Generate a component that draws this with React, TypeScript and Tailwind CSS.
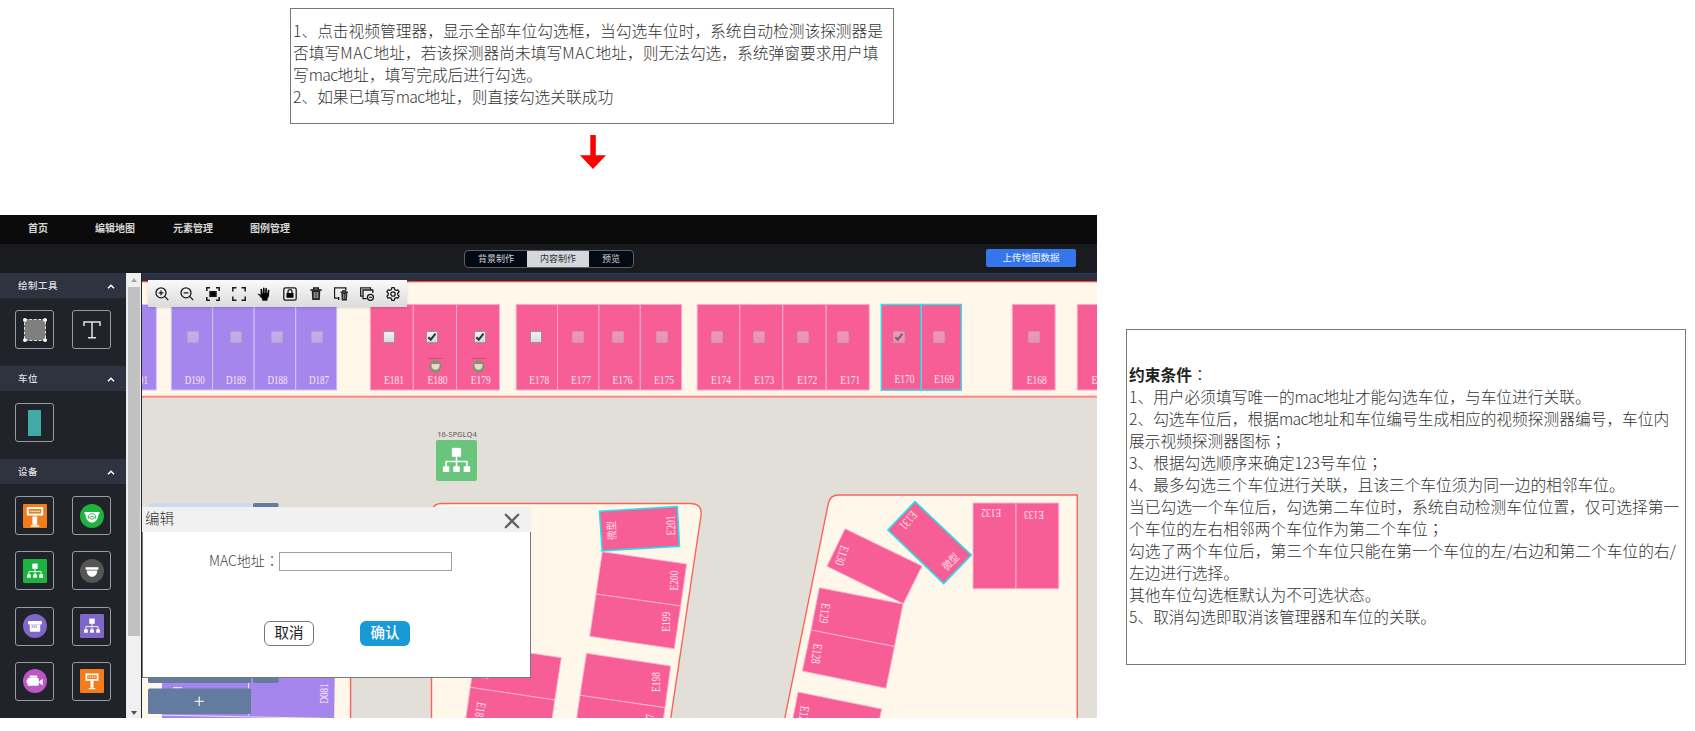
import React from "react";

type Pt = [number, number];

const CJK = "font-['Noto_Sans_CJK_SC',sans-serif]";
const CJK_MID = "font-['Noto_Sans_CJK_TC',sans-serif]";

/* ---------- Notes ---------- */

function NoteLine({ text, bold = false }: { text: string; bold?: boolean }) {
  return (
    <p className={bold ? "whitespace-nowrap font-bold text-[#222]" : "whitespace-nowrap"}>
      {text.split(/([；：]|MAC|mac)/).map((part, i) => {
        if (part === "；" || part === "：") {
          return (
            <span key={i} lang="zh-TW" className={`font-light ${CJK_MID}`}>
              {part}
            </span>
          );
        }
        if (part === "MAC") return <span key={i} className="tracking-[0.700px]">{part}</span>;
        if (part === "mac") return <span key={i} className="tracking-[-0.600px]">{part}</span>;
        return <React.Fragment key={i}>{part}</React.Fragment>;
      })}
    </p>
  );
}

const FLOW_NOTE = [
  "1、点击视频管理器，显示全部车位勾选框，当勾选车位时，系统自动检测该探测器是",
  "否填写MAC地址，若该探测器尚未填写MAC地址，则无法勾选，系统弹窗要求用户填",
  "写mac地址，填写完成后进行勾选。",
  "2、如果已填写mac地址，则直接勾选关联成功",
];

const RULES = [
  "1、用户必须填写唯一的mac地址才能勾选车位，与车位进行关联。",
  "2、勾选车位后，根据mac地址和车位编号生成相应的视频探测器编号，车位内",
  "展示视频探测器图标；",
  "3、根据勾选顺序来确定123号车位；",
  "4、最多勾选三个车位进行关联，且该三个车位须为同一边的相邻车位。",
  "当已勾选一个车位后，勾选第二车位时，系统自动检测车位位置，仅可选择第一",
  "个车位的左右相邻两个车位作为第二个车位；",
  "勾选了两个车位后，第三个车位只能在第一个车位的左/右边和第二个车位的右/",
  "左边进行选择。",
  "其他车位勾选框默认为不可选状态。",
  "5、取消勾选即取消该管理器和车位的关联。",
];

/* ---------- Sidebar ---------- */

function Tree({ color }: { color: string }) {
  return (
    <svg viewBox="0 0 24 24" className="h-full w-full">
      <rect width="24" height="24" rx="1.2" fill={color} />
      <rect x="9.3" y="4.6" width="5.4" height="5.2" fill="#fff" />
      <path d="M12 9.5v6M5.9 15.500v-2.900h12.200v2.900" fill="none" stroke="#fff" strokeWidth="0.9" />
      <rect x="4" y="15.300" width="3.800" height="3.500" rx="0.400" fill="#fff" />
      <rect x="10.100" y="15.300" width="3.800" height="3.500" rx="0.400" fill="#fff" />
      <rect x="16.200" y="15.300" width="3.800" height="3.500" rx="0.400" fill="#fff" />
    </svg>
  );
}

function Sign({ small = false }: { small?: boolean }) {
  return (
    <svg viewBox="0 0 24 24" className="h-full w-full">
      <rect width="24" height="24" rx="1" fill="#f27b1a" />
      {small ? (
        <g>
          <path d="M5.500 4.500h13v7.300h-13z" fill="#fff" />
          <path d="M7.200 6.200h9.600v3.800H7.200z" fill="#f27b1a" />
          <path d="M8.200 8.100h7.600" stroke="#fff" strokeWidth="1" strokeDasharray="1.300 0.500" />
          <path d="M10.500 11.800h3v6.900h-3zM8.700 19h6.600v1.300H8.700z" fill="#fff" />
        </g>
      ) : (
        <g>
          <path d="M3.800 3h16.400v8.600H3.800z" fill="#fff" />
          <path d="M5.800 5h12.400v4.600H5.800z" fill="#f27b1a" />
          <path d="M7 7.300h10" stroke="#fff" strokeWidth="1" strokeDasharray="1.300 0.500" />
          <path d="M9.400 12.600h4.800v8.200H9.400zM7.600 21.200h8.600v1.500H7.600z" fill="#fff" />
        </g>
      )}
    </svg>
  );
}

function DomeGreen() {
  return (
    <svg viewBox="0 0 24 24" className="h-full w-full">
      <circle cx="12" cy="12" r="12" fill="#1fb23c" />
      <path d="M4.500 8h15v1.700h-.8c-.3 5-2.800 8.800-6.700 8.800S5.600 14.700 5.300 9.700h-.8z" fill="#fff" />
      <path d="M8.800 14.800a3.600 3.600 0 116.400 0" fill="none" stroke="#1fb23c" strokeWidth="0.900" />
      <ellipse cx="12" cy="13.700" rx="2" ry="1.500" fill="none" stroke="#1fb23c" strokeWidth="0.900" />
    </svg>
  );
}

function DomeGray() {
  return (
    <svg viewBox="0 0 24 24" className="h-full w-full">
      <circle cx="12" cy="12" r="12" fill="#555" />
      <path d="M5.600 8.200h12.800v2.600H5.600z" fill="#fff" />
      <path d="M6.800 11.500h10.400c0 3.900-2.200 6.300-5.200 6.300s-5.200-2.400-5.200-6.300z" fill="#fff" />
    </svg>
  );
}

function Detector() {
  return (
    <svg viewBox="0 0 24 24" className="h-full w-full">
      <circle cx="12" cy="12" r="12" fill="#7f66c8" />
      <rect x="5" y="7" width="14" height="3.500" rx="1" fill="#fff" />
      <path d="M6.800 10.500h10.400v6c0 .8-.5 1.300-1.300 1.300H8.100c-.8 0-1.300-.5-1.300-1.300z" fill="#fff" />
      <path d="M9.200 11v3M11.200 11v3M13.200 11v3" stroke="#7f66c8" strokeWidth="0.700" />
    </svg>
  );
}

function Camera() {
  return (
    <svg viewBox="0 0 24 24" className="h-full w-full">
      <circle cx="12" cy="12" r="12" fill="#bb56c4" />
      <rect x="6.500" y="6.600" width="8" height="2.200" rx="1" fill="#fff" />
      <rect x="4.500" y="9" width="11.300" height="7.800" rx="1.300" fill="#fff" />
      <path d="M16.300 12.300l3.500-2.500v6.700l-3.500-2.500z" fill="#fff" />
      <rect x="3.600" y="11" width="1.500" height="3" fill="#fff" />
    </svg>
  );
}

function AreaIcon() {
  return (
    <svg viewBox="0 0 24 24" className="h-full w-full">
      <rect x="1.500" y="1.500" width="21" height="21" fill="#7f7f7f" stroke="#eee" strokeWidth="0.900" strokeDasharray="3 1.600" />
      <circle cx="1.900" cy="1.900" r="1.900" fill="#fff" />
      <circle cx="22.100" cy="1.900" r="1.900" fill="#fff" />
      <circle cx="1.900" cy="22.100" r="1.900" fill="#fff" />
      <circle cx="22.100" cy="22.100" r="1.900" fill="#fff" />
    </svg>
  );
}

function TextIcon() {
  return (
    <svg viewBox="0 0 24 24" className="h-full w-full" fill="none" stroke="#e4e4e6" strokeWidth="1.500">
      <path d="M4 8V4h16v4M12 4v15.700M8 19.800h8" />
    </svg>
  );
}

function Tile({ children }: { children: React.ReactNode }) {
  return (
    <div className="flex h-[39px] w-[39px] items-center justify-center rounded-[3px] border border-[#9a9ba0]">
      <div className="h-6 w-6">{children}</div>
    </div>
  );
}

function Section({ title, children }: { title: string; children: React.ReactNode }) {
  return (
    <section>
      <h2 className="flex h-[25px] items-center justify-between bg-[#2f333f] pl-[18px] pr-[11px]">
        <span className="text-[9.500px] font-medium leading-none tracking-[0.500px] text-[#dedfe2]">{title}</span>
        <svg viewBox="0 0 8 5" className="mt-0.5 h-[5px] w-2" fill="none" stroke="#fff" strokeWidth="1.500">
          <path d="M1 4.200L4 1.300l3 2.900" />
        </svg>
      </h2>
      <div className="grid grid-cols-[57px_39px] gap-y-[16.300px] pb-[17px] pl-[15px] pt-3">{children}</div>
    </section>
  );
}

function Sidebar() {
  return (
    <aside className="flex h-[445px] w-[142px] shrink-0 bg-[#20232a]">
      <div className="h-full w-[126px] overflow-hidden">
        <Section title="绘制工具">
          <Tile><AreaIcon /></Tile>
          <Tile><TextIcon /></Tile>
        </Section>
        <Section title="车位">
          <Tile>
            <div className="mx-auto h-[26px] w-[13px] -translate-y-px bg-[#41aaa6]" />
          </Tile>
        </Section>
        <Section title="设备">
          <Tile><Sign /></Tile>
          <Tile><DomeGreen /></Tile>
          <Tile><Tree color="#1cb440" /></Tile>
          <Tile><DomeGray /></Tile>
          <Tile><Detector /></Tile>
          <Tile><Tree color="#7f66c8" /></Tile>
          <Tile><Camera /></Tile>
          <Tile><Sign small /></Tile>
        </Section>
      </div>
      <div className="flex h-full w-[15px] flex-col items-center border-l border-[#e8e8e8] bg-[#f0f0f0]">
        <div className="flex h-[14px] items-center justify-center">
          <svg viewBox="0 0 6 4" className="h-1 w-1.5" fill="#a5a5a5"><path d="M0 4l3-4 3 4z" /></svg>
        </div>
        <div className="h-[349px] w-3 bg-[#c1c1c1]" />
        <div className="mt-auto flex h-[11px] items-center justify-center">
          <svg viewBox="0 0 6 4" className="h-1 w-1.5" fill="#505050"><path d="M0 0l3 4 3-4z" /></svg>
        </div>
      </div>
    </aside>
  );
}

/* ---------- Map ---------- */

type Spot = { x: number; w: number; label: string; lx: number; ly?: number; kind: "p" | "k" | "c" };

const TOP_SPOTS: Spot[] = [
  { x: 115, w: 41.300, label: "D191", lx: 138, kind: "p" },
  { x: 171.300, w: 41.300, label: "D190", lx: 194.700, kind: "p" },
  { x: 212.600, w: 41.500, label: "D189", lx: 236, kind: "p" },
  { x: 254.100, w: 41.600, label: "D188", lx: 277.500, kind: "p" },
  { x: 295.700, w: 41, label: "D187", lx: 319, kind: "p" },
  { x: 370.300, w: 43, label: "E181", lx: 394, kind: "k" },
  { x: 413.300, w: 43.200, label: "E180", lx: 437.500, kind: "k" },
  { x: 456.500, w: 43, label: "E179", lx: 480.800, kind: "k" },
  { x: 516.200, w: 41.300, label: "E178", lx: 539.300, kind: "k" },
  { x: 557.500, w: 41.400, label: "E177", lx: 581, kind: "k" },
  { x: 598.900, w: 41.400, label: "E176", lx: 622.500, kind: "k" },
  { x: 640.300, w: 41.300, label: "E175", lx: 664, kind: "k" },
  { x: 697.200, w: 42.600, label: "E174", lx: 721, kind: "k" },
  { x: 739.800, w: 43, label: "E173", lx: 764.300, kind: "k" },
  { x: 782.800, w: 43.400, label: "E172", lx: 807.300, kind: "k" },
  { x: 826.200, w: 43, label: "E171", lx: 850.200, kind: "k" },
  { x: 881.300, w: 40, label: "E170", lx: 904.500, ly: 379, kind: "c" },
  { x: 921.300, w: 40, label: "E169", lx: 944, ly: 379, kind: "c" },
  { x: 1012.300, w: 42.800, label: "E168", lx: 1036.700, kind: "k" },
  { x: 1077.300, w: 43, label: "E167", lx: 1101.500, kind: "k" },
];

type Slot = { pts: Pt[]; cyan?: boolean };

const SLOTS: Slot[] = [
  { pts: [[602.300, 551.700], [686.700, 564], [680.700, 606], [596, 594]] },
  { pts: [[596, 594], [680.700, 606], [674.300, 648.700], [589.700, 636.300]] },
  { pts: [[586.500, 653.300], [670.700, 666], [665, 707.700], [580, 695.300]] },
  { pts: [[580, 695.300], [665, 707.700], [659, 749], [574, 737]] },
  { pts: [[476.500, 645], [561.300, 657.700], [554.800, 700], [470.300, 687.300]] },
  { pts: [[470.300, 687.300], [554.800, 700], [548.700, 742], [464.300, 729]] },
  { pts: [[599.500, 511.300], [677.300, 506.700], [679.500, 546.300], [602.200, 550.800]], cyan: true },
  { pts: [[973, 503], [1016, 503], [1016, 588.700], [973, 588.700]] },
  { pts: [[1016, 503], [1058.700, 503], [1058.700, 588.700], [1016, 588.700]] },
  { pts: [[845, 528.700], [922, 566], [903.300, 603.700], [827, 566.300]] },
  { pts: [[819.300, 587.700], [903, 604], [894.500, 646.500], [811, 630]] },
  { pts: [[811, 630], [894.500, 646.500], [886, 688.300], [802.300, 671]] },
  { pts: [[798, 692], [881.700, 709], [873, 750], [790, 733]] },
  { pts: [[915, 501.600], [971.200, 555], [943.700, 583.500], [887.900, 530]], cyan: true },
];

const SLOT_LABELS: { t: string; x: number; y: number; r: number }[] = [
  { t: "E201", x: 670.700, y: 525.500, r: -92 },
  { t: "微型", x: 611.500, y: 530.500, r: -93 },
  { t: "E200", x: 673.300, y: 580.500, r: -90 },
  { t: "E199", x: 665.500, y: 621.800, r: -90 },
  { t: "E198", x: 655.500, y: 682, r: -90 },
  { t: "E197", x: 649.500, y: 724, r: -90 },
  { t: "E188", x: 486, y: 669, r: 98 },
  { t: "E187", x: 480, y: 712, r: 100 },
  { t: "E132", x: 991.300, y: 513.700, r: 180 },
  { t: "E133", x: 1034, y: 515.300, r: 180 },
  { t: "E131", x: 908.500, y: 520.500, r: 130 },
  { t: "微型", x: 950.500, y: 561.500, r: -46 },
  { t: "E130", x: 842, y: 555.700, r: 108 },
  { t: "E129", x: 824.700, y: 613.300, r: 97 },
  { t: "E128", x: 816.700, y: 653.700, r: 97 },
  { t: "E127", x: 803.700, y: 716, r: 97 },
  { t: "D081", x: 324, y: 693.500, r: -90 },
];

function Label({ t, x, y, r = 0 }: { t: string; x: number; y: number; r?: number }) {
  const cjk = t === "微型";
  return (
    <text
      transform={`translate(${x} ${y}) rotate(${r})`}
      x={cjk ? -9.500 : -10}
      y={4.300}
      textLength={cjk ? 19 : 20}
      lengthAdjust="spacingAndGlyphs"
      className={cjk ? "fill-[#ffd9e6] font-['Noto_Sans_CJK_SC',sans-serif] text-[11px]" : "fill-[#ffe3f0] font-['Liberation_Serif',serif] text-[13px]"}
    >
      {t}
    </text>
  );
}

function MapDrawing() {
  const pink = "#f75e95";
  const purple = "#a586ed";
  return (
    <svg viewBox="142 273 955 445" className="block h-[445px] w-[955px]">
      <rect x="142" y="273" width="955" height="445" fill="#e1dfd8" />
      <rect x="142" y="273" width="955" height="8" fill="#2b313e" />
      <rect x="142" y="273" width="955" height="1" fill="#293c60" />
      <rect x="142" y="281" width="955" height="115" fill="#fff7e9" />
      <rect x="142" y="281" width="955" height="1.300" fill="#ee5147" />
      <rect x="142" y="395.700" width="955" height="2" fill="#ff8a82" />

      <path d="M130 508.500H340q10.600 0 10.600 10.600V730H130z" fill="#fff7e9" stroke="#f9645d" strokeWidth="1.400" />
      <path d="M431.500 730V515q0-11.500 10-11.500H690q12.500 0 11 12L669 730z" fill="#fff7e9" stroke="#f9645d" strokeWidth="1.400" />
      <path d="M783 727L828.300 503.500q1.600-8.500 10.500-8.500h238.500V730z" fill="#fff7e9" stroke="#f9645d" strokeWidth="1.400" />

      {TOP_SPOTS.filter((s) => s.kind !== "c").map((s) => (
        <rect key={s.label} x={s.x} y="304.500" width={s.w} height="85.500" fill={s.kind === "p" ? purple : pink} stroke={s.kind === "p" ? "#d3c2f3" : "#fda9c6"} strokeWidth="1" />
      ))}
      {TOP_SPOTS.filter((s) => s.kind === "c").map((s) => (
        <rect key={s.label} x={s.x} y="304.500" width={s.w} height="85.700" fill={pink} stroke="#3fd8e8" strokeWidth="1.500" />
      ))}
      {TOP_SPOTS.map((s) => (
        <Label key={s.label} t={s.label} x={s.lx} y={s.ly ?? 380} />
      ))}

      {[435.500, 478.500].map((x) => (
        <g key={x}>
          <path d={`M${x - 7} 358.400h14`} stroke="#b04a72" strokeWidth="1" strokeDasharray="2 0.500" />
          <circle cx={x} cy="366.500" r="5.900" fill="#719a69" />
          <path d={`M${x - 4} 364h8v1.500c0 2.800-1.600 4.300-4 4.300s-4-1.500-4-4.300z`} fill="#f5d0cf" />
        </g>
      ))}

      <path d="M162 660H335L334 730H162z" fill={purple} />
      <path d="M248.500 660V715.500M162 715.200L334 718.500" fill="none" stroke="#ece2f5" strokeWidth="1" />

      {SLOTS.map((s, i) => (
        <polygon key={i} points={s.pts.map((p) => p.join(",")).join(" ")} fill={pink} stroke={s.cyan ? "#24e0ee" : "#fdb3cd"} strokeWidth={s.cyan ? 1.600 : 0.900} />
      ))}
      {SLOT_LABELS.map((l, i) => (
        <Label key={i} {...l} />
      ))}

      <rect x="148" y="503" width="103" height="12" rx="1.500" fill="#cbdaef" />
      <rect x="253" y="503" width="25.500" height="12" rx="1.500" fill="#637b9f" />
      <rect x="148" y="660" width="103" height="23" rx="1.500" fill="#637b9f" />
      <rect x="253" y="660" width="25.500" height="23" rx="1.500" fill="#637b9f" />
      <path d="M173 687.700h9" stroke="#e8dcf8" strokeWidth="1.400" />
      <rect x="148" y="688.500" width="103" height="25.500" rx="1.500" fill="#637b9f" />
      <path d="M194.500 701.300h9.500M199.200 696.500v9.500" stroke="#fff" strokeWidth="1.100" />
    </svg>
  );
}

type Box = { x: number; on?: boolean; off?: boolean };

const BOXES: Box[] = [
  { x: 193, off: true }, { x: 236, off: true }, { x: 277, off: true }, { x: 317, off: true },
  { x: 389 }, { x: 432, on: true }, { x: 480, on: true }, { x: 536 },
  { x: 578, off: true }, { x: 618, off: true }, { x: 662, off: true },
  { x: 717, off: true }, { x: 759, off: true }, { x: 803, off: true }, { x: 843, off: true },
  { x: 899, on: true, off: true }, { x: 939, off: true }, { x: 1034, off: true },
];

function Check({ x, on, off }: Box) {
  return (
    <div
      className={`absolute top-[58px] h-3 w-3 rounded-[1.500px] border bg-linear-to-b ${
        off ? "border-[#a29da3]/50 from-[#eeeeee]/40 to-[#dddddd]/40" : "border-[#999] from-[#f1f1f1] to-[#dadada]"
      }`}
      style={{ left: x - 148 }}
    >
      {on && (
        <svg viewBox="0 0 10 10" className={`h-2.5 w-2.5 ${off ? "opacity-55" : ""}`} fill="none" stroke="#2e2e2e" strokeWidth="2">
          <path d="M1.400 5.300l2.300 2.400L8.500 1.700" />
        </svg>
      )}
    </div>
  );
}

const ICON = "h-[14px] w-[14px]";

function MapToolbar() {
  const s = { viewBox: "0 0 14 14", className: ICON, fill: "none", stroke: "#1a1a1a", strokeWidth: 1.300 };
  return (
    <div className="absolute left-[6px] top-[7px] flex h-[27px] w-[259px] items-center gap-[11.700px] bg-linear-to-b from-[#fafafa] to-[#dcdcdc] pl-[6.500px] shadow-sm">
      <svg {...s}><circle cx="6" cy="5.800" r="5" /><path d="M9.600 9.400l3.700 3.700M3.600 5.800h4.800M6 3.400v4.800" /></svg>
      <svg {...s}><circle cx="6" cy="5.800" r="5" /><path d="M9.600 9.400l3.700 3.700M3.600 5.800h4.800" /></svg>
      <svg {...s} strokeWidth={1.500}><path d="M.8 4V.8H4M10 .8h3.200V4M13.200 10v3.200H10M4 13.200H.8V10" /><rect x="4" y="4.700" width="6" height="4.600" fill="#000" /></svg>
      <svg {...s} strokeWidth={1.500}><path d="M.8 4.500V.8h3.700M9.500.8h3.700v3.700M13.200 9.500v3.700H9.500M4.500 13.200H.8V9.500" /></svg>
      <svg viewBox="0 0 14 14" className={ICON} fill="#050505" stroke="#050505" strokeLinecap="round">
        <path d="M4.700 7L4.300 2.600M6.800 6.500V1.400M8.900 6.500L9.200 1.900M11 7.500l.6-3.900" strokeWidth="1.700" fill="none" />
        <path d="M1.300 7.200c.9-.4 1.700.4 2.600 1.300V6.400h7.800c.3 2.500-.4 4.400-1.500 5.300v1.700H5.500v-1.500C4 10.900 3 8.900 1.300 7.200z" strokeWidth="0.500" />
      </svg>
      <svg {...s}><rect x="0.800" y="0.800" width="12.400" height="12.400" rx="1.600" /><path d="M5 6.300V4.700a2 2 0 014 0v1.600" /><rect x="3.500" y="6" width="7" height="4.700" rx="0.400" fill="#000" stroke="none" /></svg>
      <svg {...s}><path d="M1.300 3h11.400M4.700 2.800V1.100h4.600v1.700" strokeWidth="1.500" /><path d="M2.700 3.300h8.600l-.5 9.800H3.200z" fill="#222" stroke="none" /><path d="M5.200 5v6.300M7 5v6.300M8.800 5v6.300" stroke="#eee" strokeWidth="0.700" /></svg>
      <svg {...s} viewBox="0.5 0.3 14 14"><path d="M5.500 11.500H1V1.200h11.300v2M5.200 10.200v3" /><path d="M7 5.400h7.500M9.200 5V4h3v1" strokeWidth="1.100" /><path d="M7.800 5.900h6l-.4 7.900H8.200z" fill="#222" stroke="none" /><path d="M9.900 7v5.300M11.700 7v5.300" stroke="#ddd" strokeWidth="0.600" /></svg>
      <svg {...s}><path d="M2.600 9.200H.7V.8h9.800v1.600" /><path d="M6.800 11.600H3V3h9.800v3" /><circle cx="10.400" cy="10.300" r="3" /><path d="M8.900 10.300h3" strokeWidth="1.100" /></svg>
      <svg {...s} strokeLinejoin="round"><path d="M5.800.7h2.400l.5 1.900 1.300.7 1.900-.5 1.200 2.100-1.400 1.400v1.400l1.400 1.400-1.200 2.100-1.900-.5-1.300.7-.5 1.900H5.800l-.5-1.900-1.300-.7-1.900.5L.9 9.100l1.400-1.400V6.300L.9 4.900l1.200-2.100 1.900.5 1.300-.7z" /><circle cx="7" cy="7" r="2.200" /></svg>
    </div>
  );
}

function Dialog() {
  return (
    <div className="absolute left-0 top-[234px] flex h-[171px] w-[389px] flex-col text-[#444]">
      <div className="flex h-[25px] items-center justify-between bg-[#f1f1f1] pl-[3px] pr-[11px]">
        <span className="mb-0.5 text-[14.500px] font-light leading-none text-[#333]">编辑</span>
        <svg viewBox="0 0 16 16" className="mt-[3px] h-4 w-4" stroke="#606060" strokeWidth="2.300" strokeLinecap="round">
          <path d="M1.800 1.800l12.400 12.400M14.200 1.800L1.800 14.200" />
        </svg>
      </div>
      <div className="flex flex-1 flex-col border border-t-0 border-[#777] bg-white">
        <div className="mt-5 flex h-[19px] items-center pl-[66px]">
          <span className="mb-[3px] w-[70px] whitespace-nowrap text-[14px] font-light leading-none">
            MAC地址<span lang="zh-TW" className={CJK_MID}>：</span>
          </span>
          <input className="h-[19px] w-[173px] border border-[#a0a0a0] bg-white outline-none" readOnly />
        </div>
        <div className="mt-[50px] flex gap-[46px] pl-[121px]">
          <button className="flex h-[25px] w-[50px] items-center justify-center rounded-[6px] border border-[#777] bg-white pb-0.5 text-[14.500px] leading-none text-[#222]">取消</button>
          <button className="flex h-[25px] w-[50px] items-center justify-center rounded-[6px] bg-[#189ad6] pb-0.5 text-[14.500px] font-medium leading-none text-white">确认</button>
        </div>
      </div>
    </div>
  );
}

function MapCanvas() {
  return (
    <div className="relative h-[445px] w-[955px] shrink-0 overflow-hidden">
      <MapDrawing />
      {BOXES.map((b) => (
        <Check key={b.x} {...b} />
      ))}
      <MapToolbar />
      <div className="absolute left-[294px] top-[155px] flex w-[42px] flex-col items-center">
        <span className="whitespace-nowrap font-['Open_Sans',sans-serif] text-[7.500px] font-semibold leading-[12px] text-[#77756f]">16-SPGLQ4</span>
        <div className="h-[41px] w-[41px] -translate-x-px">
          <Tree color="#69c57b" />
        </div>
      </div>
      <Dialog />
    </div>
  );
}

function Editor() {
  return (
    <main className="flex h-[503px] w-[1097px] flex-col overflow-hidden bg-[#1a1b1f]">
      <nav className="flex h-[29px] shrink-0 items-center bg-[#0b0b0b] pb-[3px] pl-[28px] text-[10px] font-bold leading-none text-[#d6d6d6]">
        <span className="w-[67px]">首页</span>
        <span className="w-[78px]">编辑地图</span>
        <span className="w-[77px]">元素管理</span>
        <span>图例管理</span>
      </nav>
      <div className="flex h-[29px] shrink-0 items-center justify-between pl-[464px] pr-[21px]">
        <div className="flex h-[18px] w-[170px] overflow-hidden rounded-[4px] border border-[#5b5f66] bg-[#040a14] text-[9px] leading-none text-[#d0d3d8]">
          <span className="flex w-[62px] items-center justify-center">背景制作</span>
          <span className="flex w-[62px] items-center justify-center bg-[#d5d7dc] text-[#333]">内容制作</span>
          <span className="flex flex-1 items-center justify-center">预览</span>
        </div>
        <button className="mb-0.5 flex h-[18px] w-[90px] items-center justify-center rounded-[2px] bg-[#3577ea] text-[9.500px] leading-none text-[#eef4ff]">上传地图数据</button>
      </div>
      <div className="flex">
        <Sidebar />
        <MapCanvas />
      </div>
    </main>
  );
}

export default function App() {
  return (
    <div lang="zh-CN" className={`flex h-[731px] w-[1695px] overflow-hidden bg-white ${CJK}`}>
      <div className="flex w-[1097px] shrink-0 flex-col">
        <div className="ml-[290px] mt-2 h-[116px] w-[604px] border border-[#797979] pl-0.5 pt-[11px] text-[15.720px] font-light leading-[22px] text-[#333]">
          {FLOW_NOTE.map((l) => (
            <NoteLine key={l} text={l} />
          ))}
        </div>
        <svg viewBox="0 0 26 34" className="ml-[580px] mt-[11px] h-[34px] w-[26px]" fill="#f00">
          <path d="M10.300 0h5.500v20.300H26L13 34 0 20.300h10.300z" />
        </svg>
        <div className="mt-[46px]">
          <Editor />
        </div>
      </div>
      <div className="ml-[29px] mt-[329px] h-[336px] w-[560px] shrink-0 border border-[#797979] pl-0.5 pt-[34px] text-[15.720px] font-light leading-[22px] text-[#333]">
        <NoteLine text="约束条件：" bold />
        {RULES.map((l) => (
          <NoteLine key={l} text={l} />
        ))}
      </div>
    </div>
  );
}
